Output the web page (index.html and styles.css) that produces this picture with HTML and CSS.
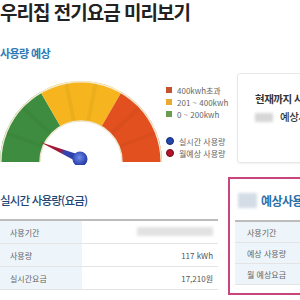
FILE: index.html
```html
<!DOCTYPE html>
<html lang="ko">
<head>
    <meta charset="UTF-8">
    <meta name="viewport" content="width=device-width, initial-scale=1.0">
    <title>우리집 전기요금 미리보기</title>
    <link rel="stylesheet" href="styles.css">
</head>
<body>
    <div class="page">
        <h1 class="title">우리집 전기요금 미리보기</h1>
        <h2 class="section-label">사용량 예상</h2>

        <div class="overview">
            <div class="gauge">
                <svg width="166" height="92" viewBox="0 0 166 92">
                    <defs>
                        <linearGradient id="needle-grad" gradientUnits="userSpaceOnUse" x1="40" y1="69" x2="80" y2="86">
                            <stop offset="0" stop-color="#b3122c"/>
                            <stop offset="0.5" stop-color="#9c1838"/>
                            <stop offset="0.62" stop-color="#3444b0"/>
                            <stop offset="1" stop-color="#2a3aa6"/>
                        </linearGradient>
                        <radialGradient id="ball-grad" cx="0.45" cy="0.4" r="0.6">
                            <stop offset="0" stop-color="#6d8cec"/>
                            <stop offset="1" stop-color="#1f33a0"/>
                        </radialGradient>
                    </defs>
                    <path d="M0 89 A81 81 0 0 1 40.5 18.9 L60.5 53.5 A41 41 0 0 0 40 89 Z" fill="#3e8c3f"/>
                    <path d="M40.5 18.9 A81 81 0 0 1 121.5 18.9 L101.5 53.5 A41 41 0 0 0 60.5 53.5 Z" fill="#f6b51f"/>
                    <path d="M121.5 18.9 A81 81 0 0 1 162 89 L122 89 A41 41 0 0 0 101.5 53.5 Z" fill="#e2501f"/>
                    <g stroke="#000" stroke-opacity="0.035" stroke-width="4">
                        <line x1="7" y1="60" x2="44" y2="74"/>
                        <line x1="22" y1="34" x2="51" y2="61"/>
                        <line x1="66" y1="9" x2="74" y2="49"/>
                        <line x1="96" y1="9" x2="88" y2="49"/>
                        <line x1="140" y1="34" x2="111" y2="61"/>
                        <line x1="155" y1="60" x2="118" y2="74"/>
                    </g>
                    <path d="M0.8 89 A80.2 80.2 0 0 1 161.2 89" fill="none" stroke="#f4ecd2" stroke-width="1.5"/>
                    <path d="M40 89 A41 41 0 0 1 122 89" fill="#fff" stroke="#eee6cc" stroke-width="1.5"/>
                    <polygon points="40,69 81.6,82.5 78.4,89.5" fill="url(#needle-grad)"/>
                    <circle cx="80" cy="86" r="7.5" fill="url(#ball-grad)"/>
                </svg>
                <div class="legend">
                    <ul class="legend-group">
                        <li><span class="swatch swatch-high"></span>400kwh초과</li>
                        <li><span class="swatch swatch-mid"></span>201 ~ 400kwh</li>
                        <li><span class="swatch swatch-low"></span>0 ~ 200kwh</li>
                    </ul>
                    <ul class="legend-group legend-marks">
                        <li><span class="dot dot-real"></span>실시간 사용량</li>
                        <li><span class="dot dot-month"></span>월예상 사용량</li>
                    </ul>
                </div>
            </div>

            <div class="summary-card">
                <p class="summary-line">현재까지 사용한 전기요금</p>
                <p class="summary-line summary-sub"><span class="blur-box"></span>예상사용량 기준</p>
            </div>
        </div>

        <div class="usage-row">
            <div class="usage-block">
                <h3 class="block-title">실시간 사용량(요금)</h3>
                <table class="usage-table">
                    <tr><th>사용기간</th><td><span class="blur-box blur-wide"></span></td></tr>
                    <tr><th>사용량</th><td>117 kWh</td></tr>
                    <tr><th>실시간요금</th><td>17,210원</td></tr>
                </table>
            </div>

            <div class="forecast-block">
                <h3 class="forecast-title"><span class="blur-box blur-tall"></span>예상사용량(요금)</h3>
                <table class="usage-table forecast-table">
                    <tr><th>사용기간</th><td></td></tr>
                    <tr><th>예상 사용량</th><td></td></tr>
                    <tr><th>월 예상요금</th><td></td></tr>
                </table>
            </div>
        </div>
    </div>
</body>
</html>
```

FILE: styles.css
```css
body {
    margin: 0;
    background: #fff;
    font-family: "Noto Sans CJK KR", "Noto Sans", sans-serif;
    color: #333;
    overflow: hidden;
}
.page {
    width: 420px;
}
.title {
    margin: 0;
    font-size: 19px;
    line-height: 24px;
    font-weight: 700;
    letter-spacing: -1px;
    color: #222;
}
.section-label {
    margin: 22px 0 0;
    font-size: 11px;
    line-height: 14px;
    font-weight: 700;
    letter-spacing: -0.6px;
    color: #2b7bb5;
}
.overview {
    display: flex;
    align-items: flex-start;
    margin-top: 13px;
}
.gauge {
    display: flex;
    width: 237px;
}
.gauge svg {
    display: block;
    flex: none;
}
.legend {
    padding-top: 11px;
}
.legend-group {
    list-style: none;
    margin: 0;
    padding: 0;
}
.legend-group li {
    display: flex;
    align-items: center;
    height: 12px;
    font-size: 8px;
    color: #666;
    white-space: nowrap;
}
.legend-marks {
    margin-top: 15px;
}
.swatch {
    width: 6px;
    height: 6px;
    margin-right: 5px;
}
.swatch-high { background: #c4532c; }
.swatch-mid { background: #eaa931; }
.swatch-low { background: #6c9b52; }
.dot {
    width: 6px;
    height: 6px;
    margin-right: 5px;
    border-radius: 50%;
}
.dot-real { background: #2446a8; border: 1px solid #102a7a; }
.dot-month { background: #b4142a; border: 1px solid #6e0a18; }
.summary-card {
    width: 150px;
    height: 90px;
    padding: 17px 0 0 17px;
    box-sizing: border-box;
    border: 1px solid #e8e8e8;
    border-radius: 3px;
    box-shadow: 0 1px 2px rgba(0, 0, 0, 0.06);
    overflow: hidden;
}
.summary-line {
    margin: 0;
    font-size: 10.5px;
    line-height: 16px;
    font-weight: 700;
    letter-spacing: -0.5px;
    color: #333;
    white-space: nowrap;
}
.summary-sub {
    display: flex;
    align-items: center;
    margin-top: 2px;
    font-weight: 500;
}
.blur-box {
    display: inline-block;
    width: 18px;
    height: 9px;
    margin-right: 7px;
    background: #d6d6d6;
    filter: blur(1.5px);
}
.blur-wide {
    width: 76px;
    margin-right: 0;
    background: #e2e2e2;
}
.blur-tall {
    width: 19px;
    height: 15px;
    margin-right: 4px;
    background: #d4dde6;
}
.usage-row {
    display: flex;
    align-items: flex-start;
    margin-top: 12px;
}
.usage-block {
    width: 218px;
    padding-top: 15px;
}
.block-title {
    margin: 0;
    font-size: 11.5px;
    line-height: 16px;
    font-weight: 500;
    letter-spacing: -0.8px;
    color: #1e4674;
}
.usage-table {
    width: 100%;
    margin-top: 11px;
    border-collapse: collapse;
    border-top: 2px solid #bcbcbc;
    font-size: 8px;
    color: #666;
}
.usage-table th,
.usage-table td {
    height: 22px;
    padding: 0;
    border-bottom: 1px solid #e4e4e4;
    font-weight: 400;
}
.usage-table th {
    width: 82px;
    padding-left: 10px;
    box-sizing: border-box;
    text-align: left;
    background: #eef5fa;
}
.usage-table td {
    padding-right: 5px;
    text-align: right;
    color: #555;
}
.forecast-block {
    width: 160px;
    height: 118px;
    margin-left: 10px;
    padding: 13px 0 0 8px;
    box-sizing: border-box;
    border: 2px solid #c8457e;
}
.forecast-title {
    display: flex;
    align-items: center;
    margin: 0;
    height: 16px;
    font-size: 12px;
    font-weight: 700;
    letter-spacing: -0.6px;
    color: #2a70a8;
    white-space: nowrap;
}
.forecast-table {
    margin-top: 12px;
    margin-left: -3px;
}
.forecast-table th,
.forecast-table td {
    height: 20px;
}
.forecast-table th {
    width: 110px;
    padding-left: 12px;
}
```
